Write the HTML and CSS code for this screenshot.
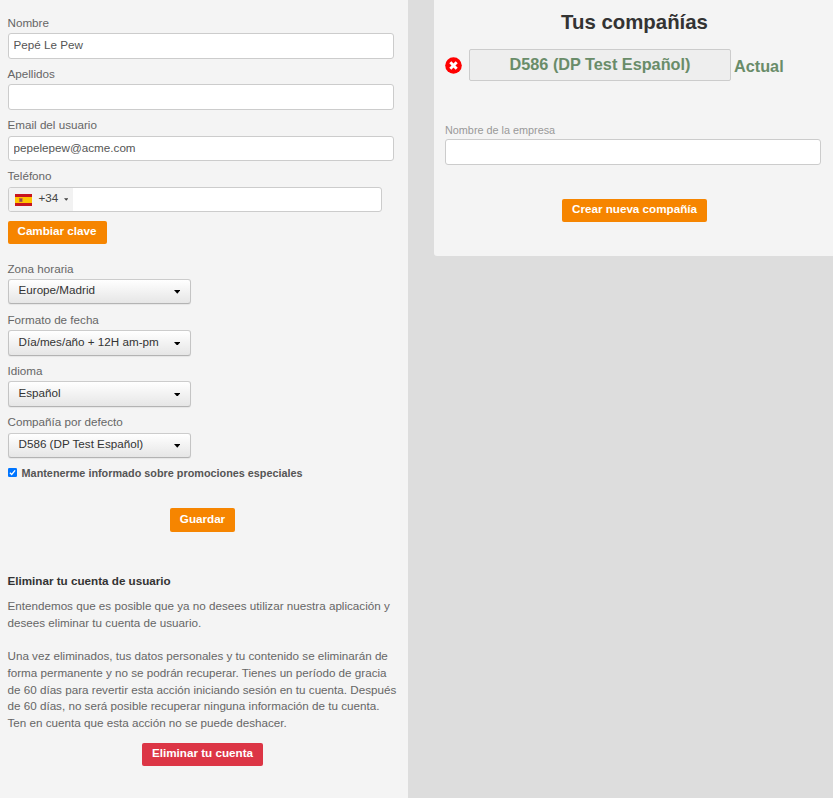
FILE: index.html
```html
<!DOCTYPE html>
<html lang="es">
<head>
<meta charset="utf-8">
<title>Perfil de usuario</title>
<link rel="stylesheet" href="styles.css">
</head>
<body>
<main class="page">
  <section class="panel profile">
    <div class="field"><label for="nombre">Nombre</label><input class="input" id="nombre" type="text" value="Pepé Le Pew"></div>
    <div class="field"><label for="apellidos">Apellidos</label><input class="input" id="apellidos" type="text"></div>
    <div class="field late"><label for="email">Email del usuario</label><input class="input short" id="email" type="text" value="pepelepew@acme.com"></div>
    <div class="field late"><label for="tel">Teléfono</label>
      <div class="phone">
        <span class="country">
          <svg class="flag" viewBox="0 0 17 12"><rect width="17" height="12" fill="#c8141e"/><rect y="3" width="17" height="6" fill="#ffc400"/><rect x="4" y="4" width="3.6" height="4" fill="#c4683c"/><rect x="5" y="5" width="2" height="2.4" fill="#8c4a50"/></svg>
          <span class="code">+34</span>
          <svg class="mini" viewBox="0 0 5 3"><path d="M0 0h5L2.5 3z" fill="#444"/></svg>
        </span>
        <input id="tel" type="text">
      </div>
    </div>
    <button class="btn change">Cambiar clave</button>

    <div class="field"><label>Zona horaria</label><button class="select short">Europe/Madrid<svg class="caret" viewBox="0 0 7 4"><path d="M0 0h7L3.5 4z"/></svg></button></div>
    <div class="field"><label>Formato de fecha</label><button class="select">Día/mes/año + 12H am-pm<svg class="caret" viewBox="0 0 7 4"><path d="M0 0h7L3.5 4z"/></svg></button></div>
    <div class="field"><label>Idioma</label><button class="select">Español<svg class="caret" viewBox="0 0 7 4"><path d="M0 0h7L3.5 4z"/></svg></button></div>
    <div class="field late"><label>Compañía por defecto</label><button class="select short">D586 (DP Test Español)<svg class="caret" viewBox="0 0 7 4"><path d="M0 0h7L3.5 4z"/></svg></button></div>

    <label class="promo"><svg class="check" viewBox="0 0 9 9"><rect width="9" height="9" rx="1.3" fill="#0075ff"/><path d="M1.9 4.7l1.8 1.8 3.4-4.1" fill="none" stroke="#fff" stroke-width="1.3"/></svg><span>Mantenerme informado sobre promociones especiales</span></label>
    <button class="btn save">Guardar</button>

    <h2>Eliminar tu cuenta de usuario</h2>
    <p>Entendemos que es posible que ya no desees utilizar nuestra aplicación y<br>desees eliminar tu cuenta de usuario.<br><br>Una vez eliminados, tus datos personales y tu contenido se eliminarán de<br>forma permanente y no se podrán recuperar. Tienes un período de gracia<br>de 60 días para revertir esta acción iniciando sesión en tu cuenta. Después<br>de 60 días, no será posible recuperar ninguna información de tu cuenta.<br>Ten en cuenta que esta acción no se puede deshacer.</p>
    <button class="btn danger">Eliminar tu cuenta</button>
  </section>

  <section class="panel companies">
    <h1>Tus compañías</h1>
    <div class="company">
      <svg class="remove" viewBox="0 0 17 17"><circle cx="8.5" cy="8.5" r="8.3" fill="#f00"/><path d="M5.3 5.3l6.4 6.4M11.7 5.3l-6.4 6.4" stroke="#fff" stroke-width="2.9"/></svg>
      <button class="name">D586 (DP Test Español)</button>
      <span class="current">Actual</span>
    </div>
    <label class="company-label" for="empresa">Nombre de la empresa</label>
    <input class="input" id="empresa" type="text">
    <button class="btn create">Crear nueva compañía</button>
  </section>
</main>
</body>
</html>
```
FILE: styles.css
```css
* { box-sizing: border-box; }
html, body { margin: 0; height: 798px; overflow: hidden; }
body { background: #ddd; color: #666; font: 11.67px/17px "Liberation Sans", Arial, sans-serif; }
button, input { font: inherit; margin: 0; padding: 0; }
svg { display: block; flex: none; }
.page { display: flex; align-items: flex-start; gap: 26px; }
.panel { background: #f4f4f4; display: flex; flex-direction: column; align-items: flex-start; }
.profile { width: 408px; height: 798px; padding: 14px 14px 0 8px; flex: none; }
.companies { width: 399px; height: 256px; padding: 11px 12px 0 11px; border-bottom-left-radius: 3px; }

.field { height: 51px; width: 100%; display: flex; flex-direction: column; align-items: flex-start; gap: 2px; flex: none; }
.field.late { gap: 3px; }
.field > label, h2, p { margin-left: -.5px; }
.input { width: 100%; height: 26px; border: 1px solid #ccc; border-radius: 3px; background: #fff; color: #555; padding: 0 4.6px 3px; }
.short.input, .short.select { height: 25px; }
.short.input { padding-bottom: 2px; }
.phone { width: 374px; height: 25px; display: flex; border: 1px solid #ccc; border-radius: 3px; background: #fff; overflow: hidden; }
.phone input { flex: 1; border: 0; background: none; }
.country { width: 64px; display: flex; align-items: center; background: #f2f2f2; padding-left: 6px; color: #444; }
.flag { width: 17px; height: 12px; }
.code { margin: -4px 7px 0 6.5px; width: 18px; }
.mini { width: 4.5px; height: 3px; }

.btn { height: 23px; flex: none; border: 0; border-radius: 2px; background: #f68500; color: #fff; font-weight: bold; padding-bottom: 4px; text-align: center; white-space: nowrap; }
.change { width: 99px; margin: 3px 0 16px; padding-right: 1px; }
.select { width: 183px; height: 26px; display: flex; align-items: center; justify-content: space-between; padding: 0 10px 4px 9.5px; border: 1px solid #bbb; border-radius: 3px; background: linear-gradient(#fff, #e6e6e6); box-shadow: 0 1px 1px rgba(0,0,0,.06); color: #333; border-color: #ccc #c4c4c4 #b3b3b3; }
.caret { width: 6.5px; height: 3.7px; margin-top: 5px; fill: #000; }
.promo { display: flex; align-items: center; gap: 4.6px; height: 17px; font-size: 10.83px; font-weight: bold; color: #555; }
.promo span { margin-top: 2px; }
.check { width: 9px; height: 9px; }
.save { width: 65px; height: 24px; margin: 27px 0 0 162px; }
h2 { margin-top: 40px; margin-bottom: 9px; font-size: 11.67px; line-height: 17px; color: #333; }
p { margin-top: 0; margin-bottom: 0; line-height: 16.7px; white-space: nowrap; }
.danger { width: 121px; margin: 11px 0 0 134px; background: #dc3545; }

h1 { margin: 0; width: 100%; font-size: 20.4px; line-height: 22px; text-align: center; text-indent: 3px; color: #333; }
.company { display: flex; align-items: center; margin-top: 16px; height: 32px; color: #698c69; font-size: 16.25px; font-weight: bold; }
.remove { width: 17px; height: 17px; }
.name { width: 262px; height: 32px; margin: 0 3px 0 7px; border: 1px solid #ccc; border-radius: 2px; background: #eee; color: inherit; padding-bottom: 1px; }
.current { margin-top: 3px; }
.company-label { margin-top: 41px; font-size: 10.83px; color: #999; }
.create { width: 145px; margin: 34px 0 0 117px; }
```
